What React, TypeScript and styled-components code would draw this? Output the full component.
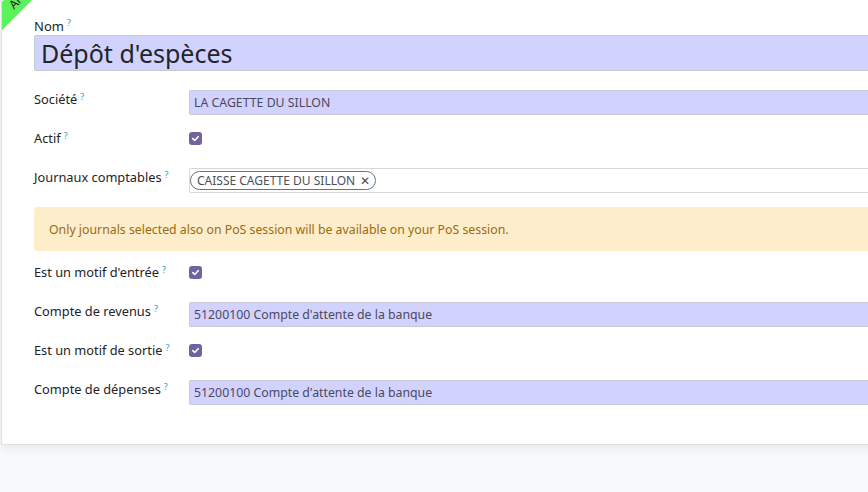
import React from 'react';
import styled, { createGlobalStyle } from 'styled-components';

const GlobalStyle = createGlobalStyle`
  html, body {
    margin: 0;
    padding: 0;
    background: #f8f9fa;
    overflow: hidden;
  }
  body {
    font-family: 'Noto Sans', 'Open Sans', sans-serif;
    font-size: 12.3px;
    color: #212529;
  }
`;

const Page = styled.div`
  width: 868px;
  height: 492px;
  overflow: hidden;
`;

const Sheet = styled.div`
  position: relative;
  margin-left: 1px;
  width: 1000px;
  background: #fff;
  border: 1px solid #dee2e6;
  border-top: none;
  box-shadow: 0 4px 8px rgba(0, 0, 0, 0.06);
  padding: 17px 0 39px 32px;
  box-sizing: border-box;
  overflow: hidden;
`;

const Ribbon = styled.div`
  position: absolute;
  top: -1px;
  left: -53px;
  width: 120px;
  height: 20px;
  box-sizing: border-box;
  background: #5cf25c;
  color: #1d2a1d;
  font-size: 12px;
  line-height: 20px;
  padding-left: 63px;
  white-space: nowrap;
  overflow: hidden;
  transform: rotate(-45deg);
  transform-origin: 50% 50%;
`;

const Help = styled.sup`
  color: #17a2c8;
  font-size: 9px;
  margin-left: 3px;
  vertical-align: top;
  position: relative;
  top: -3px;
`;

const NameLabel = styled.div`
  line-height: 18px;
  font-size: 13px;
`;

const NameInput = styled.div`
  height: 36px;
  box-sizing: border-box;
  background: #d2d2ff;
  border: 1px solid #c9c9d6;
  border-radius: 2px;
  padding: 0 6px;
  font-size: 25px;
  line-height: 34px;
  color: #212529;
`;

const Fields = styled.div`
  margin-top: 19px;
  display: flex;
  flex-direction: column;
  gap: 14px;
`;

const Row = styled.div`
  display: grid;
  grid-template-columns: 155px 1fr;
  min-height: 25px;
`;

const Label = styled.div`
  line-height: 19px;
  font-size: 12.8px;
  color: #1f2327;
  white-space: nowrap;
`;

const Input = styled.div<{ $plain?: boolean }>`
  height: 25px;
  box-sizing: border-box;
  background: ${(p) => (p.$plain ? '#fff' : '#d2d2ff')};
  border: 1px solid ${(p) => (p.$plain ? '#d6d8db' : '#c9c9d6')};
  border-radius: 2px;
  padding: 0 4px;
  line-height: 23px;
  color: #4a4a5c;
  display: flex;
  align-items: center;
`;

const Check = styled.span`
  margin-top: 3px;
  width: 13px;
  height: 13px;
  border-radius: 3px;
  background: #71639e;
  display: flex;
  align-items: center;
  justify-content: center;
`;

const Tag = styled.span`
  display: inline-flex;
  align-items: center;
  gap: 5px;
  height: 19px;
  box-sizing: border-box;
  padding: 0 5px 0 6px;
  margin-left: -4px;
  border: 1px solid #6c757d;
  border-radius: 10px;
  font-size: 12px;
  color: #495057;
  line-height: 17px;
`;

const Close = styled.span`
  font-size: 12px;
  color: #495057;
`;

const Alert = styled.div`
  height: 44px;
  box-sizing: border-box;
  background: #fdedcb;
  border-radius: 3px;
  padding: 0 15px;
  display: flex;
  align-items: center;
  color: #9a6b12;
  margin-bottom: -2px;
`;

const Checkmark = () => (
  <svg width="9" height="9" viewBox="0 0 10 10">
    <path d="M2 5.2 L4.1 7.2 L8 3" stroke="#fff" strokeWidth="1.8" fill="none" strokeLinecap="round" strokeLinejoin="round" />
  </svg>
);

const FieldLabel = ({ children }: { children: React.ReactNode }) => (
  <Label>
    {children}
    <Help>?</Help>
  </Label>
);

export default function App() {
  return (
    <Page>
      <GlobalStyle />
      <Sheet>
        <Ribbon>Archivé</Ribbon>
        <NameLabel>
          Nom<Help>?</Help>
        </NameLabel>
        <NameInput>Dépôt d'espèces</NameInput>
        <Fields>
          <Row>
            <FieldLabel>Société</FieldLabel>
            <Input>LA CAGETTE DU SILLON</Input>
          </Row>
          <Row>
            <FieldLabel>Actif</FieldLabel>
            <div>
              <Check><Checkmark /></Check>
            </div>
          </Row>
          <Row>
            <FieldLabel>Journaux comptables</FieldLabel>
            <Input $plain>
              <Tag>
                CAISSE CAGETTE DU SILLON <Close>✕</Close>
              </Tag>
            </Input>
          </Row>
          <Alert>Only journals selected also on PoS session will be available on your PoS session.</Alert>
          <Row>
            <FieldLabel>Est un motif d'entrée</FieldLabel>
            <div>
              <Check><Checkmark /></Check>
            </div>
          </Row>
          <Row>
            <FieldLabel>Compte de revenus</FieldLabel>
            <Input>51200100 Compte d'attente de la banque</Input>
          </Row>
          <Row>
            <FieldLabel>Est un motif de sortie</FieldLabel>
            <div>
              <Check><Checkmark /></Check>
            </div>
          </Row>
          <Row>
            <FieldLabel>Compte de dépenses</FieldLabel>
            <Input>51200100 Compte d'attente de la banque</Input>
          </Row>
        </Fields>
      </Sheet>
    </Page>
  );
}
